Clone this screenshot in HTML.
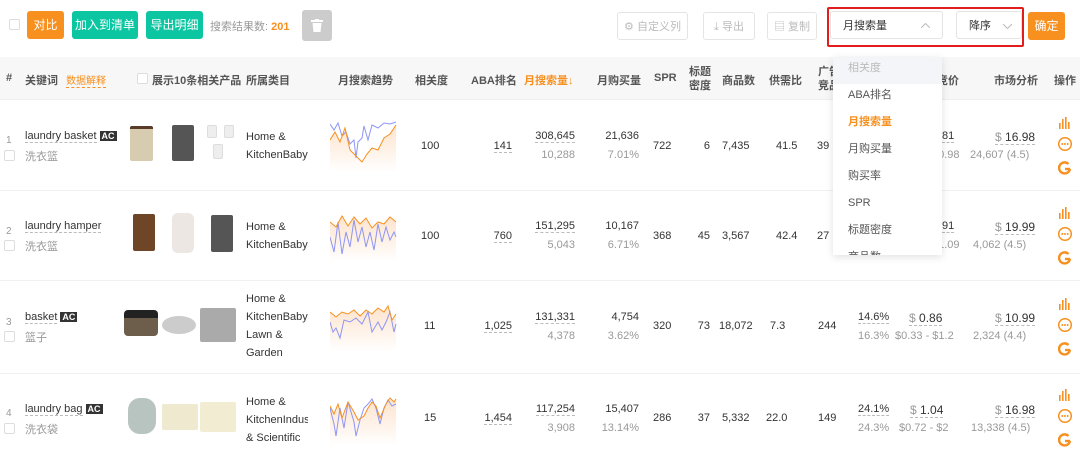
<!DOCTYPE html>
<html><head><meta charset="utf-8"><style>
*{margin:0;padding:0;box-sizing:border-box}
body{width:1080px;height:461px;overflow:hidden;background:#fff;font-family:"Liberation Sans","Noto Sans CJK SC",sans-serif;font-size:11px;color:#333;position:relative}
.a{position:absolute;white-space:nowrap}
.btn{position:absolute;height:28px;line-height:28px;border-radius:3px;color:#fff;text-align:center;font-size:12px}
.wb{position:absolute;height:28px;line-height:28px;border:1px solid #e4e4e4;border-radius:3px;color:#bbb;text-align:center;font-size:11px;background:#fff}
.cb{position:absolute;width:11px;height:11px;border:1px solid #ddd;border-radius:2px;background:#fff}
.hd{position:absolute;top:57px;left:0;width:1080px;height:43px;background:#f7f7f8;border-bottom:1px solid #eee}
.th{position:absolute;font-weight:bold;color:#555;font-size:11px;white-space:nowrap}
.rl{position:absolute;left:0;width:1080px;height:1px;background:#f0f0f0}
.r{position:absolute;text-align:right;white-space:nowrap}
.u{border-bottom:1px dashed #bbb}
.g{color:#999}
.ac{background:#333;color:#fff;font-size:9px;padding:0 2px;margin-left:3px;font-weight:bold}
.dd{position:absolute;left:833px;top:57px;width:109px;height:198px;background:#fff;box-shadow:0 2px 8px rgba(0,0,0,.12);overflow:hidden}
.dd div{height:27px;line-height:23px;padding-left:15px;font-size:11px;color:#555}
.im{position:absolute;border-radius:2px}
.ops{position:absolute;left:1058px}
</style></head><body>

<div class="cb" style="left:9px;top:19px"></div>
<div class="btn" style="left:27px;top:11px;width:37px;background:#f7901e">对比</div>
<div class="btn" style="left:72px;top:11px;width:66px;background:#0cc6a2">加入到清单</div>
<div class="btn" style="left:146px;top:11px;width:57px;background:#0cc6a2">导出明细</div>
<div class="a" style="left:210px;top:18px;color:#999;font-size:11px">搜索结果数: <b style="color:#f7901e">201</b></div>
<div class="btn" style="left:302px;top:10px;width:30px;height:31px;background:#ccc;line-height:31px">
<svg width="12" height="13" viewBox="0 0 12 13" style="margin-top:9px"><rect x="0" y="1" width="12" height="2" fill="#fff"/><rect x="4" y="0" width="4" height="2" fill="#fff"/><path d="M1.5 4h9l-1 9h-7z" fill="#fff"/></svg></div>

<div class="wb" style="left:617px;top:12px;width:71px">⚙ 自定义列</div>
<div class="wb" style="left:703px;top:12px;width:52px">⤓ 导出</div>
<div class="wb" style="left:767px;top:12px;width:50px">▤ 复制</div>
<div class="a" style="left:827px;top:7px;width:197px;height:40px;border:2px solid #e31c1c;border-radius:2px"></div>
<div class="wb" style="left:830px;top:11px;width:113px;color:#333;text-align:left;padding-left:12px">月搜索量
<svg style="position:absolute;right:12px;top:11px" width="9" height="5"><polyline points="0,5 4.5,0.5 9,5" fill="none" stroke="#bbb"/></svg></div>
<div class="wb" style="left:956px;top:11px;width:66px;color:#333;text-align:left;padding-left:12px">降序
<svg style="position:absolute;right:9px;top:12px" width="9" height="5"><polyline points="0,0 4.5,4.5 9,0" fill="none" stroke="#bbb"/></svg></div>
<div class="btn" style="left:1028px;top:12px;width:37px;background:#f7901e">确定</div>

<div class="hd"></div>
<div class="th" style="left:6px;top:72px">#</div>
<div class="th" style="left:25px;top:72px">关键词 <span style="color:#f7901e;font-weight:normal;font-size:10px;border-bottom:1px dashed #f7901e;margin-left:5px">数据解释</span></div>
<div class="cb" style="left:137px;top:73px"></div>
<div class="th" style="left:152px;top:72px">展示10条相关产品</div>
<div class="th" style="left:246px;top:72px">所属类目</div>
<div class="th" style="left:338px;top:72px">月搜索趋势</div>
<div class="th" style="left:415px;top:72px">相关度</div>
<div class="th" style="left:471px;top:72px">ABA排名</div>
<div class="th" style="left:524px;top:72px;color:#f7901e">月搜索量↓</div>
<div class="th" style="left:597px;top:72px">月购买量</div>
<div class="th" style="left:654px;top:72px">SPR</div>
<div class="th" style="left:689px;top:65px;line-height:14px">标题<br>密度</div>
<div class="th" style="left:722px;top:72px">商品数</div>
<div class="th" style="left:769px;top:72px">供需比</div>
<div class="th" style="left:818px;top:65px;line-height:14px">广告<br>竞品</div>
<div class="th" style="left:937px;top:72px">竞价</div>
<div class="th" style="left:994px;top:72px">市场分析</div>
<div class="th" style="left:1054px;top:72px">操作</div>

<div class="rl" style="top:190px"></div>
<div class="rl" style="top:280px"></div>
<div class="rl" style="top:373px"></div>

<svg width="0" height="0" style="position:absolute"><defs>
<linearGradient id="gr" x1="0" y1="0" x2="0" y2="1"><stop offset="0" stop-color="#fde3cc"/><stop offset="1" stop-color="#fff"/></linearGradient>
<g id="opi">
<rect x="1" y="6" width="1.6" height="6" fill="#f7901e"/><rect x="4" y="2" width="1.6" height="10" fill="#f7901e"/><rect x="7" y="0" width="1.6" height="12" fill="#f7901e"/><rect x="10" y="5" width="1.6" height="7" fill="#f7901e"/>
<circle cx="7" cy="27" r="6.3" fill="none" stroke="#f7901e" stroke-width="1.5"/><circle cx="4.3" cy="27" r="1" fill="#f7901e"/><circle cx="7" cy="27" r="1" fill="#f7901e"/><circle cx="9.7" cy="27" r="1" fill="#f7901e"/>
<path d="M12 52 A5.5 5.5 0 1 1 10.5 47" fill="none" stroke="#f7901e" stroke-width="2.4"/><path d="M7 52 H12.2" stroke="#f7901e" stroke-width="2.4"/>
</g></defs></svg>

<!-- row 1 -->
<div class="a g" style="left:6px;top:135px;font-size:10px">1</div><div class="cb" style="left:4px;top:150px"></div>
<div class="a" style="left:25px;top:130px"><span class="u">laundry basket</span><span class="ac">AC</span></div>
<div class="a g" style="left:25px;top:148px">洗衣篮</div>
<div class="im" style="left:130px;top:126px;width:23px;height:35px;background:#d8ccb0;border-top:3px solid #5a3a28"></div>
<div class="im" style="left:172px;top:125px;width:22px;height:36px;background:#555"></div>
<div class="im" style="left:207px;top:125px;width:10px;height:13px;background:#eee;border:1px solid #ddd"></div>
<div class="im" style="left:224px;top:125px;width:10px;height:13px;background:#eee;border:1px solid #ddd"></div>
<div class="im" style="left:213px;top:144px;width:10px;height:15px;background:#eee;border:1px solid #ddd"></div>
<div class="a" style="left:246px;top:128px;line-height:18px;width:64px;overflow:hidden">Home &amp;<br>KitchenBaby</div>
<svg class="a" style="left:330px;top:120px" width="68" height="52">
<path d="M0 20 L5 12 10 22 15 8 20 30 25 35 32 42 37 34 42 28 48 30 54 18 60 14 66 5 L66 52 0 52Z" fill="url(#gr)"/>
<polyline fill="none" stroke="#8e95f5" stroke-width="1" points="0,4 4,10 8,3 12,16 16,12 20,24 24,20 26,38 28,22 32,18 34,6 38,20 42,5 48,8 54,3 60,4 66,2"/>
<polyline fill="none" stroke="#f7901e" stroke-width="1" points="0,20 5,12 10,22 15,8 20,30 25,35 32,42 37,34 42,28 48,30 54,18 60,14 66,5"/></svg>
<div class="a" style="left:421px;top:140px">100</div>
<div class="r u" style="right:568px;top:140px">141</div>
<div class="r u" style="right:505px;top:130px">308,645</div><div class="r g" style="right:505px;top:149px">10,288</div>
<div class="r" style="right:441px;top:130px">21,636</div><div class="r g" style="right:441px;top:149px">7.01%</div>
<div class="a" style="left:653px;top:140px">722</div>
<div class="r" style="right:370px;top:140px">6</div>
<div class="a" style="left:722px;top:140px">7,435</div>
<div class="a" style="left:776px;top:140px">41.5</div>
<div class="a" style="left:817px;top:140px">39</div>
<div class="a u" style="left:942px;top:130px">81</div><div class="a g" style="left:932px;top:149px">$0.98</div>
<div class="a u" style="left:995px;top:130px;font-size:12px"><span class="g">$</span> 16.98</div><div class="a g" style="left:970px;top:149px">24,607 (4.5)</div>
<svg class="ops" style="top:117px" width="14" height="60"><use href="#opi"/></svg>

<!-- row 2 -->
<div class="a g" style="left:6px;top:226px;font-size:10px">2</div><div class="cb" style="left:4px;top:240px"></div>
<div class="a" style="left:25px;top:220px"><span class="u">laundry hamper</span></div>
<div class="a g" style="left:25px;top:238px">洗衣篮</div>
<div class="im" style="left:133px;top:214px;width:22px;height:37px;background:#6e4526"></div>
<div class="im" style="left:172px;top:213px;width:22px;height:40px;background:#ece7e3;border-radius:6px"></div>
<div class="im" style="left:211px;top:215px;width:22px;height:37px;background:#555"></div>
<div class="a" style="left:246px;top:218px;line-height:18px;width:64px;overflow:hidden">Home &amp;<br>KitchenBaby</div>
<svg class="a" style="left:330px;top:212px" width="68" height="50">
<path d="M0 10 L6 15 12 4 18 14 24 5 30 12 36 6 42 16 48 10 54 12 60 5 66 10 L66 50 0 50Z" fill="url(#gr)"/>
<polyline fill="none" stroke="#8e95f5" stroke-width="1" points="0,25 4,40 8,10 12,42 16,20 20,35 24,8 28,30 32,15 36,35 40,20 44,38 48,12 52,30 56,15 60,28 64,20 66,25"/>
<polyline fill="none" stroke="#f7901e" stroke-width="1" points="0,10 6,15 12,4 18,14 24,5 30,12 36,6 42,16 48,10 54,12 60,5 66,10"/></svg>
<div class="a" style="left:421px;top:230px">100</div>
<div class="r u" style="right:568px;top:230px">760</div>
<div class="r u" style="right:505px;top:220px">151,295</div><div class="r g" style="right:505px;top:239px">5,043</div>
<div class="r" style="right:441px;top:220px">10,167</div><div class="r g" style="right:441px;top:239px">6.71%</div>
<div class="a" style="left:653px;top:230px">368</div>
<div class="r" style="right:370px;top:230px">45</div>
<div class="a" style="left:722px;top:230px">3,567</div>
<div class="a" style="left:776px;top:230px">42.4</div>
<div class="a" style="left:817px;top:230px">27</div>
<div class="a u" style="left:942px;top:220px">91</div><div class="a g" style="left:932px;top:239px">$1.09</div>
<div class="a u" style="left:995px;top:220px;font-size:12px"><span class="g">$</span> 19.99</div><div class="a g" style="left:973px;top:239px">4,062 (4.5)</div>
<svg class="ops" style="top:207px" width="14" height="60"><use href="#opi"/></svg>

<!-- row 3 -->
<div class="a g" style="left:6px;top:317px;font-size:10px">3</div><div class="cb" style="left:4px;top:331px"></div>
<div class="a" style="left:25px;top:311px"><span class="u">basket</span><span class="ac">AC</span></div>
<div class="a g" style="left:25px;top:329px">篮子</div>
<div class="im" style="left:124px;top:310px;width:34px;height:26px;background:#6d5e4c;border-top:8px solid #222;border-radius:4px"></div>
<div class="im" style="left:162px;top:316px;width:34px;height:18px;background:#ccc;border-radius:50%"></div>
<div class="im" style="left:200px;top:308px;width:36px;height:34px;background:#aaa"></div>
<div class="a" style="left:246px;top:290px;line-height:18px;width:64px;overflow:hidden">Home &amp;<br>KitchenBaby<br>Lawn &amp;<br>Garden</div>
<svg class="a" style="left:330px;top:302px" width="68" height="50">
<path d="M0 10 L6 15 12 10 18 12 24 8 30 14 36 8 42 12 48 6 54 10 58 4 62 18 66 12 L66 50 0 50Z" fill="url(#gr)"/>
<polyline fill="none" stroke="#8e95f5" stroke-width="1" points="0,20 3,30 6,26 10,36 14,18 20,20 26,16 32,22 38,10 42,30 48,20 52,28 56,20 60,10 64,30 66,22"/>
<polyline fill="none" stroke="#f7901e" stroke-width="1" points="0,10 6,15 12,10 18,12 24,8 30,14 36,8 42,12 48,6 54,10 58,4 62,18 66,12"/></svg>
<div class="a" style="left:424px;top:320px">11</div>
<div class="r u" style="right:568px;top:320px">1,025</div>
<div class="r u" style="right:505px;top:311px">131,331</div><div class="r g" style="right:505px;top:330px">4,378</div>
<div class="r" style="right:441px;top:311px">4,754</div><div class="r g" style="right:441px;top:330px">3.62%</div>
<div class="a" style="left:653px;top:320px">320</div>
<div class="r" style="right:370px;top:320px">73</div>
<div class="a" style="left:719px;top:320px">18,072</div>
<div class="a" style="left:770px;top:320px">7.3</div>
<div class="a" style="left:818px;top:320px">244</div>
<div class="a u" style="left:858px;top:311px">14.6%</div><div class="a g" style="left:858px;top:330px">16.3%</div>
<div class="a u" style="left:909px;top:311px;font-size:12px"><span class="g">$</span> 0.86</div><div class="a g" style="left:895px;top:330px">$0.33 - $1.2</div>
<div class="a u" style="left:995px;top:311px;font-size:12px"><span class="g">$</span> 10.99</div><div class="a g" style="left:973px;top:330px">2,324 (4.4)</div>
<svg class="ops" style="top:298px" width="14" height="60"><use href="#opi"/></svg>

<!-- row 4 -->
<div class="a g" style="left:6px;top:408px;font-size:10px">4</div><div class="cb" style="left:4px;top:423px"></div>
<div class="a" style="left:25px;top:403px"><span class="u">laundry bag</span><span class="ac">AC</span></div>
<div class="a g" style="left:25px;top:421px">洗衣袋</div>
<div class="im" style="left:128px;top:398px;width:28px;height:36px;background:#b7c4bf;border-radius:12px"></div>
<div class="im" style="left:162px;top:404px;width:36px;height:26px;background:#efe9cf"></div>
<div class="im" style="left:200px;top:402px;width:36px;height:30px;background:#f2ecd2"></div>
<div class="a" style="left:246px;top:393px;line-height:18px;width:62px;overflow:hidden">Home &amp;<br>KitchenIndustrial<br>&amp; Scientific</div>
<svg class="a" style="left:330px;top:394px" width="68" height="52">
<path d="M0 12 L4 20 8 10 12 24 18 8 24 18 28 26 34 22 38 14 42 8 46 12 50 24 56 10 60 4 64 8 66 5 L66 52 0 52Z" fill="url(#gr)"/>
<polyline fill="none" stroke="#8e95f5" stroke-width="1" points="0,14 4,30 6,42 10,14 14,34 18,8 24,28 26,42 30,26 34,14 38,10 42,5 46,14 50,30 54,14 58,6 62,12 66,10"/>
<polyline fill="none" stroke="#f7901e" stroke-width="1" points="0,12 4,20 8,10 12,24 18,8 24,18 28,26 34,22 38,14 42,8 46,12 50,24 56,10 60,4 64,8 66,5"/></svg>
<div class="a" style="left:424px;top:412px">15</div>
<div class="r u" style="right:568px;top:412px">1,454</div>
<div class="r u" style="right:505px;top:403px">117,254</div><div class="r g" style="right:505px;top:422px">3,908</div>
<div class="r" style="right:441px;top:403px">15,407</div><div class="r g" style="right:441px;top:422px">13.14%</div>
<div class="a" style="left:653px;top:412px">286</div>
<div class="r" style="right:370px;top:412px">37</div>
<div class="a" style="left:722px;top:412px">5,332</div>
<div class="a" style="left:766px;top:412px">22.0</div>
<div class="a" style="left:818px;top:412px">149</div>
<div class="a u" style="left:858px;top:403px">24.1%</div><div class="a g" style="left:858px;top:422px">24.3%</div>
<div class="a u" style="left:910px;top:403px;font-size:12px"><span class="g">$</span> 1.04</div><div class="a g" style="left:899px;top:422px">$0.72 - $2</div>
<div class="a u" style="left:995px;top:403px;font-size:12px"><span class="g">$</span> 16.98</div><div class="a g" style="left:971px;top:422px">13,338 (4.5)</div>
<svg class="ops" style="top:389px" width="14" height="60"><use href="#opi"/></svg>

<div class="dd">
<div style="background:#f4f5f8;color:#bbb">相关度</div>
<div>ABA排名</div>
<div style="color:#f7901e;font-weight:bold">月搜索量</div>
<div>月购买量</div>
<div>购买率</div>
<div>SPR</div>
<div>标题密度</div>
<div>商品数</div>
</div>
</body></html>
